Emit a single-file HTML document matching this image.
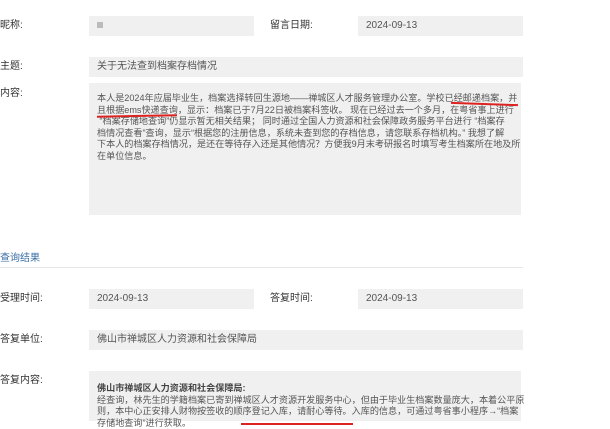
<!DOCTYPE html>
<html><head><meta charset="utf-8"><style>
*{margin:0;padding:0;box-sizing:border-box}
body{width:610px;height:410px;overflow:hidden;background:#fff;font-family:"Liberation Sans","Noto Sans CJK SC",sans-serif;color:#333;position:relative}
.a{position:absolute}
.lb{font-size:10px;color:#333;line-height:12px}
.bx{background:#f0f0f0;font-size:10px;color:#555;line-height:20px;padding-left:8px}
.tx{font-size:9.1px;color:#555;line-height:11.6px;white-space:nowrap}
.ul{position:absolute;height:1.5px;background:#d22}
</style></head><body>
<div class="a lb" style="left:0;top:20px">昵称:</div>
<div class="a bx" style="left:89px;top:16px;width:165px;height:20px"><span style="display:inline-block;width:6px;height:6px;background:#bbb;vertical-align:middle"></span></div>
<div class="a lb" style="left:270px;top:20px">留言日期:</div>
<div class="a bx" style="left:358px;top:16px;width:165px;height:20px">2024-09-13</div>

<div class="a lb" style="left:0;top:61px">主题:</div>
<div class="a bx" style="left:89px;top:57px;width:434px;height:20px">关于无法查到档案存档情况</div>

<div class="a lb" style="left:0;top:88px">内容:</div>
<div class="a" style="left:89px;top:83px;width:432px;height:132px;background:#f0f0f0"></div>
<div class="a tx" style="left:97px;top:93px">本人是2024年应届毕业生，档案选择转回生源地——禅城区人才服务管理办公室。学校已经邮递档案，并<br>且根据ems快递查询，显示：档案已于7月22日被档案科签收。 现在已经过去一个多月，在粤省事上进行<br>&nbsp;“档案存储地查询”仍显示暂无相关结果； 同时通过全国人力资源和社会保障政务服务平台进行 “档案存<br>档情况查看”查询，显示“根据您的注册信息，系统未查到您的存档信息，请您联系存档机构。” 我想了解<br>下本人的档案存档情况，是还在等待存入还是其他情况？方便我9月末考研报名时填写考生档案所在地及所<br>在单位信息。</div>
<div class="ul" style="left:451px;top:103px;width:67px;transform:rotate(2deg)"></div>
<div class="ul" style="left:97px;top:115px;width:80px;transform:rotate(-1deg)"></div>

<div class="a" style="left:0;top:249px;font-size:10px;color:#3a6ea5">查询结果</div>
<div class="a" style="left:0;top:267px;width:523px;height:1px;background:#e8e8e8"></div>

<div class="a lb" style="left:0;top:293px">受理时间:</div>
<div class="a bx" style="left:89px;top:289px;width:165px;height:20px">2024-09-13</div>
<div class="a lb" style="left:270px;top:293px">答复时间:</div>
<div class="a bx" style="left:358px;top:289px;width:165px;height:20px">2024-09-13</div>

<div class="a lb" style="left:0;top:334px">答复单位:</div>
<div class="a bx" style="left:89px;top:330px;width:434px;height:20px">佛山市禅城区人力资源和社会保障局</div>

<div class="a lb" style="left:0;top:375px">答复内容:</div>
<div class="a" style="left:89px;top:371px;width:432px;height:50px;background:#f0f0f0"></div>
<div class="a tx" style="left:97px;top:383px"><b style="color:#444">佛山市禅城区人力资源和社会保障局:</b><br>经查询，林先生的学籍档案已寄到禅城区人才资源开发服务中心，但由于毕业生档案数量庞大，本着公平原<br>则，本中心正安排人财物按签收的顺序登记入库，请耐心等待。入库的信息，可通过粤省事小程序→“档案<br>存储地查询”进行获取。</div>
<div class="ul" style="left:241px;top:423px;width:112px"></div>
</body></html>
